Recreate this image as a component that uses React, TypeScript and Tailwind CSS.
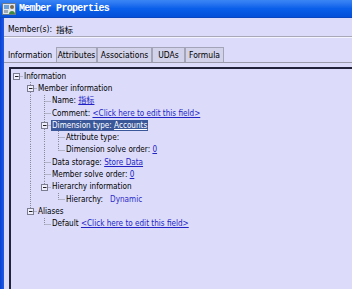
import React from "react";

type Row = {
  level: number;
  box?: boolean;
  last?: boolean;
  pass: number[];
  label: string;
  value?: string;
  kind?: "link" | "blue";
  selected?: boolean;
};

const ROW_H = 12.3;

const rows: Row[] = [
  { level: 0, box: true, last: true, pass: [], label: "Information" },
  { level: 1, box: true, pass: [], label: "Member information" },
  { level: 2, pass: [1], label: "Name: ", value: "指标", kind: "link" },
  { level: 2, pass: [1], label: "Comment: ", value: "<Click here to edit this field>", kind: "link" },
  { level: 2, box: true, pass: [1], label: "Dimension type: ", value: "Accounts", kind: "link", selected: true },
  { level: 3, pass: [1, 2], label: "Attribute type:" },
  { level: 3, last: true, pass: [1, 2], label: "Dimension solve order: ", value: "0", kind: "link" },
  { level: 2, pass: [1], label: "Data storage: ", value: "Store Data", kind: "link" },
  { level: 2, pass: [1], label: "Member solve order: ", value: "0", kind: "link" },
  { level: 2, box: true, last: true, pass: [1], label: "Hierarchy information" },
  { level: 3, last: true, pass: [1], label: "Hierarchy:", value: "Dynamic", kind: "blue" },
  { level: 1, box: true, last: true, pass: [], label: "Aliases" },
  { level: 2, last: true, pass: [], label: "Default ", value: "<Click here to edit this field>", kind: "link" },
];

const hx = (l: number) => 5 + 14 * l + 0.5;

// dotted connectors + expand box for one row
const Gutter = ({ r }: { r: Row }) => {
  const w = 13 + 14 * r.level;
  const mid = Math.floor(ROW_H / 2) + 0.5;
  const x = hx(r.level);
  return (
    <svg width={w} height={ROW_H} className="shrink-0 block">
      <g stroke="#8a8a9a" strokeWidth="1" strokeDasharray="1 1" fill="none">
        {r.pass.map((p) => (
          <line key={p} x1={hx(p)} y1={0} x2={hx(p)} y2={ROW_H} />
        ))}
        {r.level > 0 && <line x1={x} y1={0} x2={x} y2={r.last ? mid : ROW_H} />}
        <line x1={x} y1={mid} x2={w - 1} y2={mid} />
      </g>
      {r.box && (
        <g>
          <rect x={x - 3} y={mid - 3} width={6} height={6} fill="#eeeefc" stroke="#7c7c90" />
          <line x1={x - 1.5} y1={mid} x2={x + 2} y2={mid} stroke="#202020" />
        </g>
      )}
    </svg>
  );
};

const TreeRow = ({ r }: { r: Row }) => {
  const value =
    r.value &&
    (r.kind === "blue" ? (
      <span className="ml-[7px] text-[#2a2ac8]">{r.value}</span>
    ) : (
      <span className={`underline ${r.selected ? "text-white" : "text-[#2323c4]"}`}>{r.value}</span>
    ));
  return (
    <div className="flex items-center h-[12.3px]">
      <Gutter r={r} />
      <span
        className={`whitespace-pre leading-[11px] ${
          r.selected ? "bg-[#3a5799] text-white px-[1px] -ml-[1px]" : "text-black"
        }`}
      >
        {r.label}
        {value}
      </span>
    </div>
  );
};

const Tab = ({ label, w, active }: { label: string; w: string; active?: boolean }) => (
  <div
    className={`${w} h-[15px] flex items-center justify-center pt-[1px] ${
      active ? "" : "bg-[#d2d2ea] border-t border-l border-r border-[#a4a4b8]"
    }`}
  >
    {label}
  </div>
);

const AppIcon = () => (
  <svg width="14" height="14" viewBox="0 0 14 14" className="shrink-0">
    <rect x="0.5" y="1.5" width="13" height="11" fill="#dfe6f0" stroke="#6b7a8c" />
    <rect x="2" y="3" width="5" height="4" fill="#6da1d8" />
    <circle cx="10" cy="5" r="2" fill="#7a6a4a" />
    <path d="M7 12 C7 8 13 8 13 12 Z" fill="#3f8a3f" />
    <rect x="2" y="8" width="4" height="3" fill="#9aa8b8" />
  </svg>
);

export default function App() {
  return (
    <div className="w-[352px] h-[289px] overflow-hidden bg-[#dcdcfa] flex flex-col font-['DejaVu_Sans_Condensed','Liberation_Sans','Noto_Sans_CJK_SC',sans-serif] text-[8.5px]">
      {/* title bar */}
      <div className="h-[18px] shrink-0 flex items-center gap-[3px] pl-[2px] bg-gradient-to-b from-[#3b86f5] via-[#0a5fea] to-[#0550d8] border-b border-[#0a46c0]">
        <AppIcon />
        <span className="font-['Liberation_Mono',monospace] font-bold text-[10px] tracking-[-0.7px] text-white">
          Member Properties
        </span>
      </div>

      <div className="flex flex-1 min-h-0">
        <div className="w-[4px] shrink-0 bg-gradient-to-r from-[#0a3fd0] to-[#1f5ae8]" />
        <div className="flex-1 flex flex-col min-w-0">
          {/* member row */}
          <div className="h-[19px] shrink-0 flex items-center pl-[4px] pt-[5px] border-b border-[#a8a8b8] text-black">
            <span>Member(s):</span>
            <span className="ml-[4px] font-['Noto_Sans_CJK_SC',sans-serif]">指标</span>
          </div>
          <div className="h-[1px] bg-[#f4f4ff]" />

          {/* tabs */}
          <div className="mt-[9px] flex items-end border-b border-[#9a9aaa] text-black">
            <Tab label="Information" w="w-[52px]" active />
            <Tab label="Attributes" w="w-[41px]" />
            <Tab label="Associations" w="w-[55px]" />
            <Tab label="UDAs" w="w-[33px]" />
            <Tab label="Formula" w="w-[39px]" />
          </div>

          {/* tree panel */}
          <div className="mt-[4px] ml-[5px] flex-1 border-t-2 border-l-2 border-[#22223a] pt-[1px] text-[8.1px]">
            {rows.map((r, i) => (
              <TreeRow key={i} r={r} />
            ))}
          </div>
        </div>
      </div>
    </div>
  );
}
